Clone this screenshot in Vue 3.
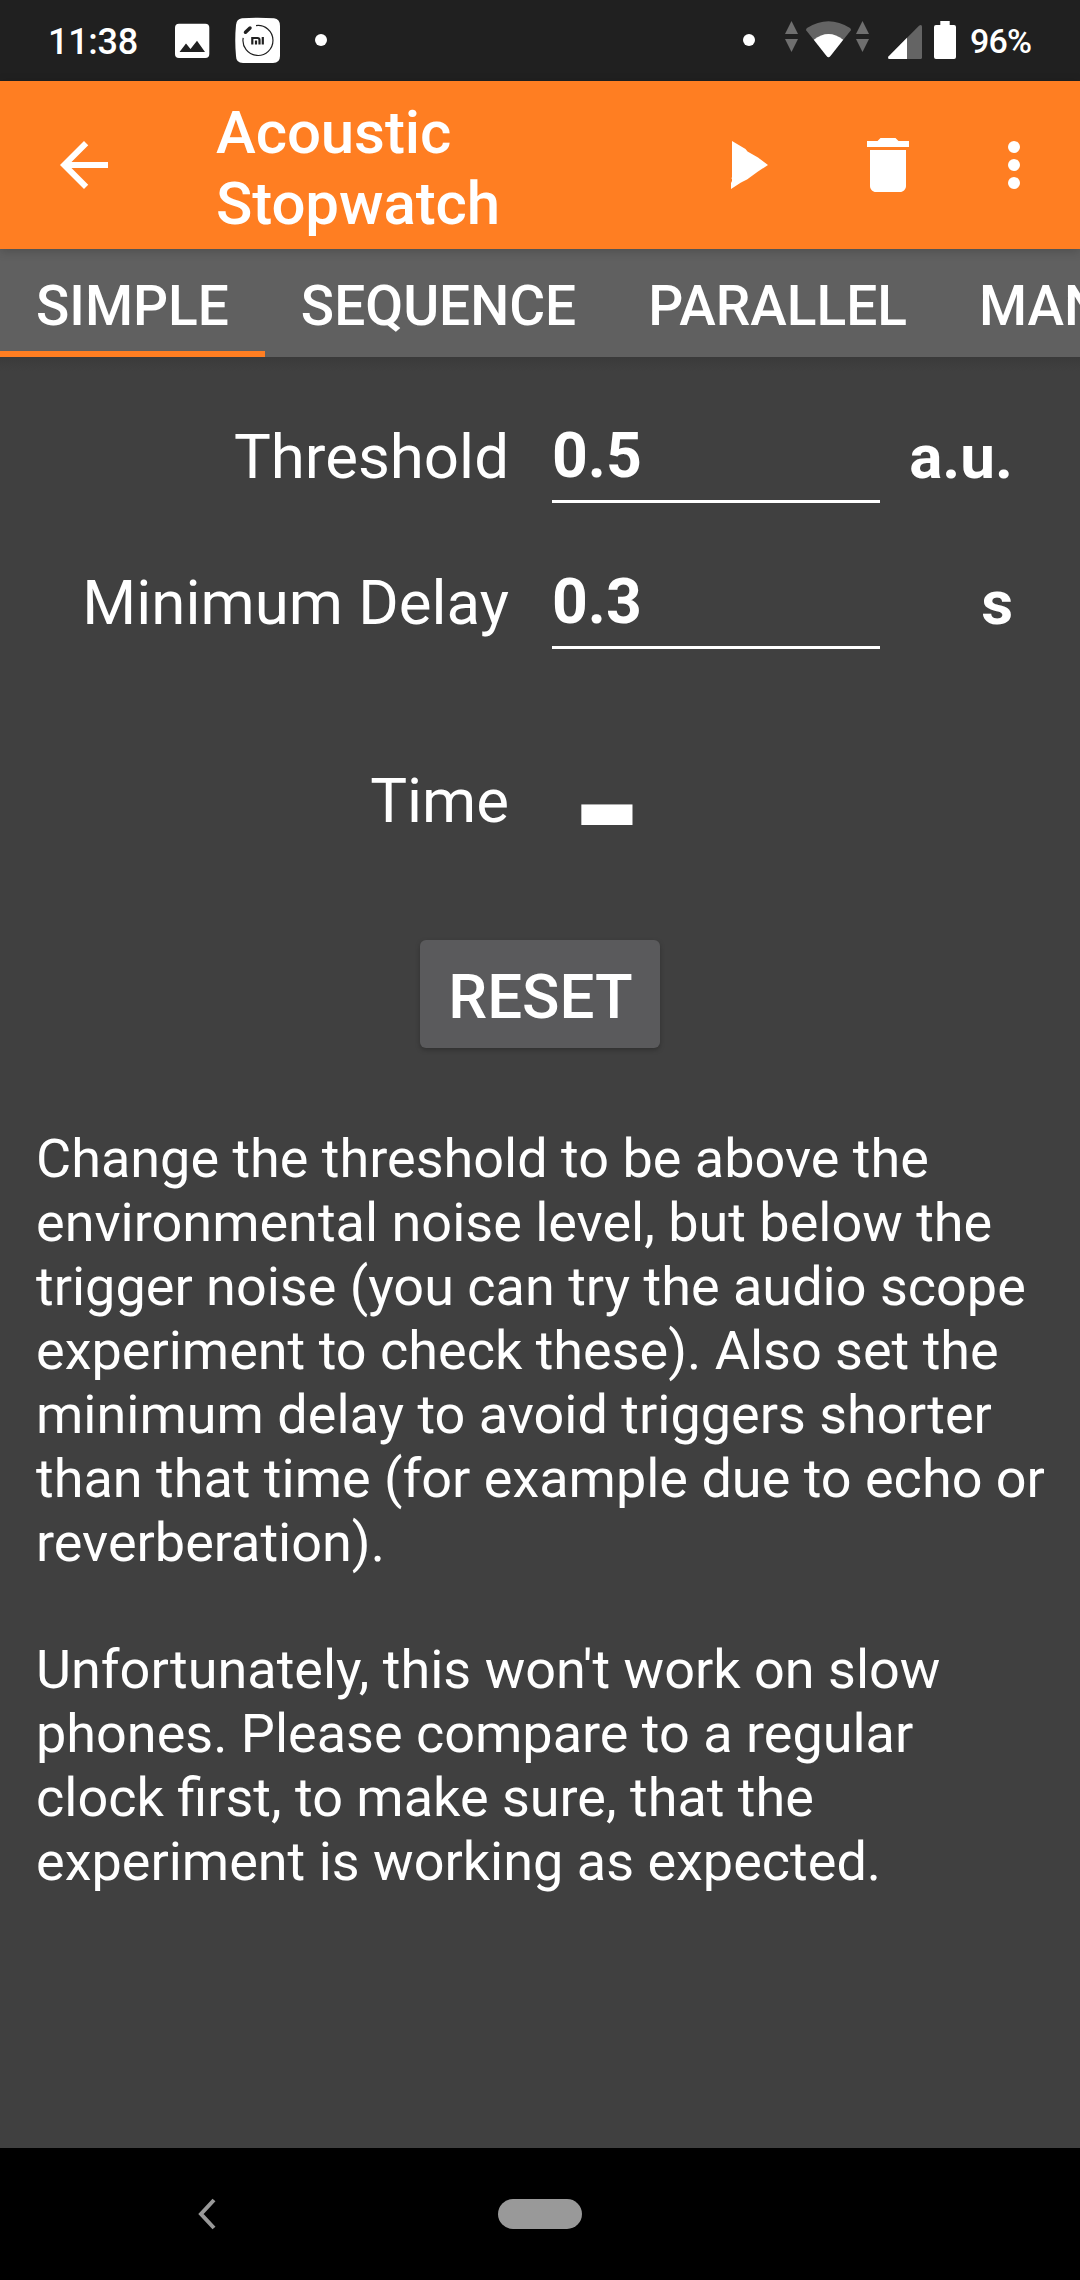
<script setup>
const tabs = ['SIMPLE', 'SEQUENCE', 'PARALLEL', 'MAN']
const fields = [
  { label: 'Threshold', value: '0.5', unit: 'a.u.' },
  { label: 'Minimum Delay', value: '0.3', unit: 's' },
]
const lines = [
  'Change the threshold to be above the',
  'environmental noise level, but below the',
  'trigger noise (you can try the audio scope',
  'experiment to check these). Also set the',
  'minimum delay to avoid triggers shorter',
  'than that time (for example due to echo or',
  'reverberation).',
  '',
  "Unfortunately, this won't work on slow",
  'phones. Please compare to a regular',
  'clock first, to make sure, that the',
  'experiment is working as expected.',
]
</script>

<template>
  <div class="screen">
    <header class="status">
      <span class="clock">11:38</span>
      <svg class="notes" width="160" height="81" viewBox="170 0 160 81">
        <rect x="175" y="23.7" width="34.3" height="34.3" rx="4" fill="#fff" />
        <path d="M179.5 52L186 43.5L190.5 49L197 40.8L205 52Z" fill="#202020" />
        <path d="M242 18.3Q258 17 274 18.3Q280 19 280 26V56Q280 63 273 63H243Q236 63 236 56Q234.5 40 236 25Q236.500 19 242 18.300Z" fill="#fff" />
        <path d="M256 25.600A15 15 0 1 1 243.200 37.800" fill="none" stroke="#202020" stroke-width="1.2" />
        <path d="M245.500 32.200L250 28" stroke="#202020" stroke-width="3.500" stroke-linecap="round" />
        <path d="M252.300 44.500V38H257.500Q259.500 38 259.500 40V44.500M256 40.500V44.500M262.800 37V44.500" fill="none" stroke="#202020" stroke-width="2.200" />
        <circle cx="321" cy="40" r="6" fill="#fff" />
      </svg>
      <svg class="signals" width="220" height="81" viewBox="740 0 220 81">
        <circle cx="749" cy="40" r="6" fill="#fff" />
        <g fill="#6f6f6f">
          <path d="M791.500 21L798 34H785Z" />
          <path d="M785 39H798L791.500 52Z" />
          <path d="M862.500 21L869 34H856Z" />
          <path d="M856 39H869L862.500 52Z" />
        </g>
        <path d="M806.300 30.500Q805.500 29 807 28Q828.500 14.500 850 28Q851.500 29 850.700 30.500L830.200 56.300Q828.500 58 826.800 56.300Z" fill="#646464" />
        <path d="M813.800 39.700Q828.500 28.500 843.200 39.700L830.200 56.300Q828.500 58 826.800 56.300Z" fill="#fff" />
        <path d="M888.500 56.500L919 25.700Q922 24 922 27V57.500Q922 59 920.500 59H889.500Q887.300 58.500 888.500 56.500Z" fill="#646464" />
        <path d="M888.500 56.500L907 37.800V59H889.500Q887.300 58.500 888.500 56.500Z" fill="#fff" />
        <path d="M940.300 21H949.700V25H954Q956 25 956 27V57Q956 59 954 59H936Q934 59 934 57V27Q934 25 936 25H940.300Z" fill="#fff" />
      </svg>
      <span class="charge">96%</span>
    </header>

    <div class="toolbar">
      <svg class="back" width="72" height="72" viewBox="0 0 24 24" fill="#fff">
        <path d="M20 11H7.830l5.590-5.590L12 4l-8 8 8 8 1.410-1.410L7.830 13H20v-2z" />
      </svg>
      <h1 class="title">Acoustic<br />Stopwatch</h1>
      <svg class="play" width="40" height="50" viewBox="0 0 40 50" fill="#fff">
        <path d="M2 1L15.500 9L17.500 11.500L28 17.500L38 25L28 31.500L17 39.500L11 42.500L1 49V43L2 41V39L1.500 38.500L2 37Z" />
      </svg>
      <svg class="trash" width="72" height="72" viewBox="0 0 24 24" fill="#fff">
        <path d="M6 19c0 1.100.9 2 2 2h8c1.100 0 2-.9 2-2V7H6v12zM19 4h-3.500l-1-1h-5l-1 1H5v2h14V4z" />
      </svg>
      <svg class="more" width="72" height="72" viewBox="0 0 24 24" fill="#fff">
        <circle cx="12" cy="6" r="2" />
        <circle cx="12" cy="12" r="2" />
        <circle cx="12" cy="18" r="2" />
      </svg>
    </div>

    <nav class="tabs">
      <div v-for="(t, i) in tabs" :key="t" class="tab" :class="{ active: i === 0 }">{{ t }}</div>
    </nav>

    <main class="content">
      <div v-for="f in fields" :key="f.label" class="row">
        <span class="label">{{ f.label }}</span>
        <span class="field">{{ f.value }}</span>
        <span class="unit">{{ f.unit }}</span>
      </div>
      <div class="row time">
        <span class="label">Time</span>
        <span class="reading">-</span>
      </div>
      <button class="reset">RESET</button>
      <div class="info">
        <div v-for="(l, i) in lines" :key="i" class="line" :class="{ blank: !l }">{{ l }}</div>
      </div>
    </main>

    <footer class="navbar">
      <svg class="chevron" width="20" height="32" viewBox="0 0 20 32">
        <path d="M17 2L4 16L17 30" fill="none" stroke="#999" stroke-width="4" />
      </svg>
      <div class="pill"></div>
    </footer>
  </div>
</template>

<style>
body {
  margin: 0;
  background: #404040;
}
</style>

<style scoped>
.screen {
  width: 1080px;
  height: 2280px;
  display: flex;
  flex-direction: column;
  overflow: hidden;
  background: #404040;
  color: #fff;
  font-family: Roboto, 'Liberation Sans', sans-serif;
}
.status {
  height: 81px;
  flex: none;
  display: flex;
  background: #202020;
  white-space: nowrap;
}
.clock {
  width: 122px;
  padding-left: 48px;
  font-size: 36px;
  font-weight: 500;
  line-height: 85px;
  letter-spacing: -0.3px;
}
.signals {
  margin-left: 410px;
}
.charge {
  margin-left: 10px;
  font-size: 34px;
  font-weight: 500;
  line-height: 83px;
  letter-spacing: -0.8px;
}
.toolbar {
  height: 168px;
  flex: none;
  display: flex;
  align-items: center;
  background: #ff7e22;
  position: relative;
  z-index: 2;
  box-shadow: 0 2px 10px rgba(0, 0, 0, 0.2);
}
.back {
  margin-left: 48px;
}
.title {
  width: 514px;
  margin: 6px 0 0 96px;
  font-size: 60px;
  font-weight: 500;
  line-height: 71px;
  letter-spacing: -0.1px;
}
.play {
  margin-right: 82px;
}
.trash {
  margin-right: 54px;
}
.tabs {
  height: 108px;
  flex: none;
  display: flex;
  overflow: hidden;
  background: #606060;
}
.tab {
  box-sizing: border-box;
  height: 108px;
  padding: 3px 36px 0;
  font-size: 55px;
  font-weight: 500;
  line-height: 108px;
  flex: none;
}
.active {
  box-shadow: inset 0 -6px #ff7e22;
}
.content {
  height: 1791px;
  flex: none;
  display: flex;
  flex-direction: column;
  box-sizing: border-box;
  padding-top: 27px;
  background: linear-gradient(#3a3a3a, #404040 14px);
}
.row {
  height: 146px;
  flex: none;
  display: flex;
  font-size: 62px;
  line-height: 146px;
}
.label {
  width: 509px;
  text-align: right;
  font-size: 61.8px;
}
.field {
  box-sizing: border-box;
  width: 328px;
  height: 119px;
  margin-left: 43px;
  font-size: 62.5px;
  font-weight: 700;
  line-height: 144px;
  border-bottom: 3px solid #fff;
}
.unit {
  width: 133px;
  text-align: right;
  font-weight: 700;
}
.time {
  margin-top: 52px;
}
.reading {
  margin-left: 62px;
  font-size: 185px;
  font-weight: 700;
  line-height: 160px;
}
.reset {
  width: 240px;
  height: 108px;
  flex: none;
  align-self: center;
  margin-top: 66px;
  padding: 6px 0 0 1px;
  border: 0;
  border-radius: 6px;
  background: #5a5a5c;
  box-shadow: 0 2px 5px rgba(0, 0, 0, 0.25);
  color: #fff;
  font-family: inherit;
  font-size: 61.8px;
  font-weight: 500;
  line-height: 102px;
}
.info {
  margin: 79px 0 0 36px;
  font-size: 54px;
}
.line {
  height: 64px;
  line-height: 64px;
  white-space: nowrap;
}
.blank {
  height: 63px;
}
.navbar {
  height: 132px;
  flex: none;
  display: flex;
  align-items: center;
  background: #000;
}
.chevron {
  margin-left: 197px;
}
.pill {
  width: 84px;
  height: 30px;
  margin-left: 281px;
  border-radius: 15px;
  background: #999;
}
</style>
